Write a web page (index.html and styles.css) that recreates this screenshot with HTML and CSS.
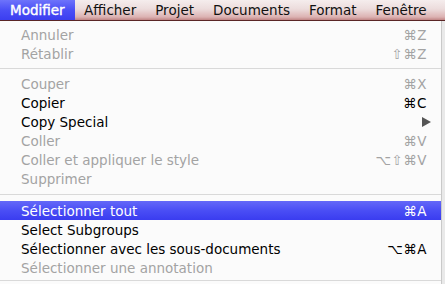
FILE: index.html
```html
<!DOCTYPE html>
<html lang="fr">
<head>
<meta charset="utf-8">
<title>Modifier</title>
<link rel="stylesheet" href="styles.css">
</head>
<body>
<div class="screen">
  <nav class="menubar">
    <span class="mb-item mb-active">Modifier</span>
    <span class="mb-item">Afficher</span>
    <span class="mb-item">Projet</span>
    <span class="mb-item">Documents</span>
    <span class="mb-item">Format</span>
    <span class="mb-item">Fenêtre</span>
    <span class="mb-item">A</span>
  </nav>
  <div class="menu">
    <div class="row disabled"><span>Annuler</span><span class="key">⌘Z</span></div>
    <div class="row disabled"><span>Rétablir</span><span class="key">⇧⌘Z</span></div>
    <div class="sep sep1"></div>
    <div class="row disabled"><span>Couper</span><span class="key">⌘X</span></div>
    <div class="row"><span>Copier</span><span class="key">⌘C</span></div>
    <div class="row"><span>Copy Special</span><span class="arrow"></span></div>
    <div class="row disabled"><span>Coller</span><span class="key">⌘V</span></div>
    <div class="row disabled"><span>Coller et appliquer le style</span><span class="key">⌥⇧⌘V</span></div>
    <div class="row disabled"><span>Supprimer</span></div>
    <div class="sep sep2"></div>
    <div class="row selected"><span>Sélectionner tout</span><span class="key">⌘A</span></div>
    <div class="row"><span>Select Subgroups</span></div>
    <div class="row"><span>Sélectionner avec les sous-documents</span><span class="key">⌥⌘A</span></div>
    <div class="row disabled"><span>Sélectionner une annotation</span></div>
    <div class="sep sep3"></div>
  </div>
</div>
</body>
</html>
```
FILE: styles.css
```css
html, body {
  margin: 0;
  padding: 0;
  background: #ececec;
}
.screen {
  width: 445px;
  height: 284px;
  overflow: hidden;
  font-family: "DejaVu Sans", "Liberation Sans", sans-serif;
  font-size: 13.5px;
  background: #e9e9e9;
}
.menubar {
  display: flex;
  height: 20px;
  background: linear-gradient(#f5eded 0%, #ecdcdc 45%, #dcb2b2 85%, #c08484 100%);
  border-bottom: 1px solid #5a2626;
  white-space: nowrap;
  overflow: hidden;
}
.mb-item {
  display: flex;
  align-items: center;
  padding: 0 9.5px;
  color: #111;
  line-height: 20px;
}
.mb-active {
  padding: 0 10px;
  color: #fff;
  -webkit-text-stroke: 0.4px #fff;
  background: linear-gradient(#6d73fb, #4a4ff6 50%, #3b3ef0);
}
.menu {
  width: 441px;
  background: #fbfbfb;
  border-right: 1px solid #c9c9c9;
  padding-top: 4px;
  height: 263px;
}
.row {
  display: flex;
  justify-content: space-between;
  align-items: center;
  height: 19px;
  padding: 0 14px 0 21px;
  color: #000;
  white-space: nowrap;
}
.row.disabled {
  color: #a3a3a3;
}
.row.selected {
  color: #fff;
  background: linear-gradient(#6468f8, #4a4ef5 50%, #3a3cf0);
}
.key {
  letter-spacing: 0.5px;
}
.arrow {
  width: 0;
  height: 0;
  margin-right: -4px;
  border-top: 5px solid transparent;
  border-bottom: 5px solid transparent;
  border-left: 9px solid #555;
}
.sep {
  display: flex;
  flex-direction: column;
  justify-content: center;
  height: 11px;
}
.sep::after {
  content: "";
  display: block;
  height: 1px;
  background: #d9d9d9;
}
.sep2 {
  height: 13px;
}
.sep3 {
  height: 6px;
}
```
